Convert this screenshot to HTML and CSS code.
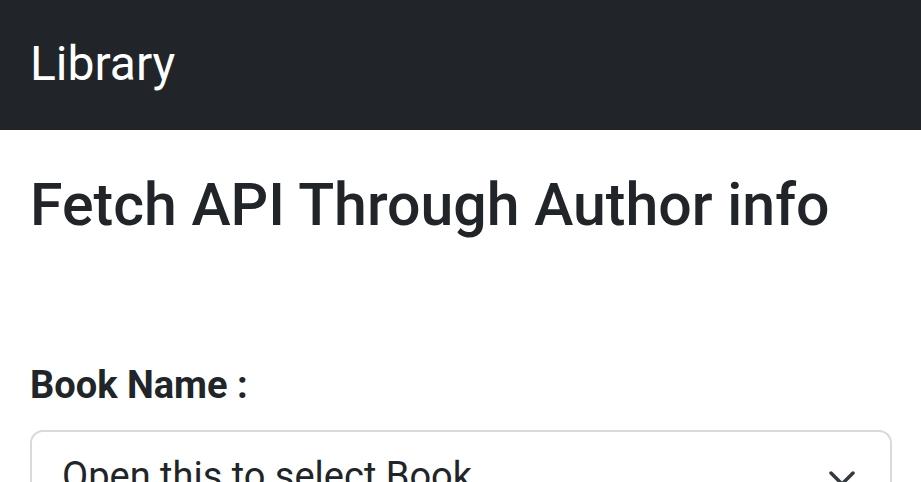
FILE: index.html
```html
<!DOCTYPE html>
<html>
<head>
<meta charset="utf-8">
<link rel="stylesheet" href="styles.css">
</head>
<body>
<nav class="navbar"><span class="brand">Library</span></nav>
<main class="container">
  <h1 class="title">Fetch API Through Author info</h1>
  <div class="field">
    <label class="label">Book Name :</label>
    <div class="select">
      <span class="select-text">Open this to select Book</span>
      <svg class="chevron" width="28" height="20" viewBox="0 0 28 20"><path d="M3 5 L14 16 L25 5" fill="none" stroke="#343a40" stroke-width="3.5" stroke-linecap="round" stroke-linejoin="round"/></svg>
    </div>
  </div>
</main>
</body>
</html>
```
FILE: styles.css
```css
* { box-sizing: border-box; }
html, body { margin: 0; padding: 0; }
body {
  font-family: Roboto, "Noto Sans", "Liberation Sans", sans-serif;
  color: #212529;
  background: #fff;
  overflow: hidden;
  height: 482px;
}
.navbar {
  height: 130px;
  background: #212529;
  display: flex;
  align-items: center;
  padding: 0 30px;
}
.brand {
  color: #fff;
  font-size: 48px;
  font-weight: 400;
  line-height: 1;
  margin-top: -2px;
}
.container {
  padding: 0 30px;
}
.title {
  margin: 40px 0 0;
  font-size: 59px;
  font-weight: 500;
  line-height: 1.2;
}
.field {
  margin-top: 122px;
}
.label {
  display: block;
  font-size: 38px;
  font-weight: 700;
  line-height: 1.2;
}
.select {
  margin-top: 22px;
  width: 862px;
  height: 110px;
  border: 2px solid #d6dadd;
  border-radius: 13px;
  display: flex;
  align-items: flex-start;
  justify-content: space-between;
  padding: 22px 32px 0 30px;
}
.select-text {
  font-size: 38px;
  line-height: 1.2;
}
.chevron {
  margin-top: 14px;
  margin-right: 2px;
}
```
